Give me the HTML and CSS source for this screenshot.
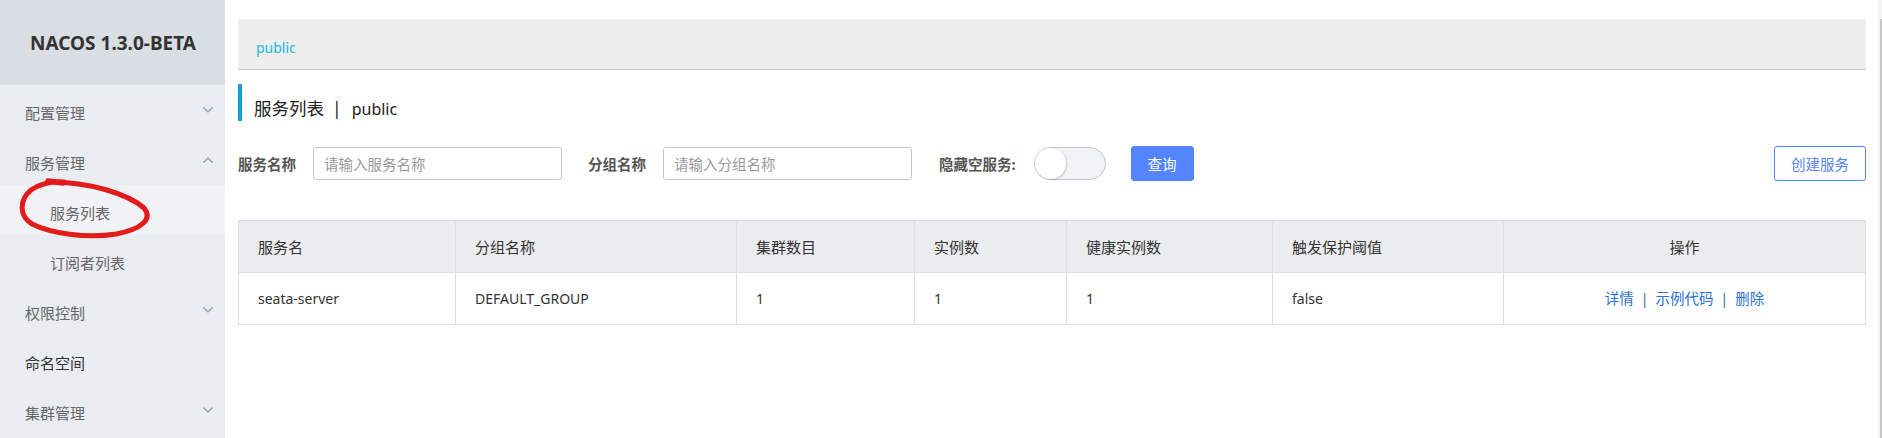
FILE: index.html
```html
<!DOCTYPE html>
<html lang="zh-CN">
<head>
<meta charset="utf-8">
<title>Nacos</title>
<link rel="stylesheet" href="styles.css">
</head>
<body>
<div class="app">
  <aside class="sidebar">
    <div class="brand">NACOS 1.3.0-BETA</div>
    <ul class="menu">
      <li class="menu-item"><span class="menu-text">配置管理</span>
        <svg class="chev" width="10" height="6" viewBox="0 0 10 6"><path d="M0.5 0.5 L5 5 L9.5 0.5" fill="none" stroke="#8b95a5" stroke-width="1.2"/></svg></li>
      <li class="menu-item"><span class="menu-text">服务管理</span>
        <svg class="chev" width="10" height="6" viewBox="0 0 10 6"><path d="M0.5 5.5 L5 1 L9.5 5.5" fill="none" stroke="#8b95a5" stroke-width="1.2"/></svg></li>
      <li class="menu-item sub active"><span class="menu-text">服务列表</span></li>
      <li class="menu-item sub"><span class="menu-text">订阅者列表</span></li>
      <li class="menu-item"><span class="menu-text">权限控制</span>
        <svg class="chev" width="10" height="6" viewBox="0 0 10 6"><path d="M0.5 0.5 L5 5 L9.5 0.5" fill="none" stroke="#8b95a5" stroke-width="1.2"/></svg></li>
      <li class="menu-item strong"><span class="menu-text">命名空间</span></li>
      <li class="menu-item"><span class="menu-text">集群管理</span>
        <svg class="chev" width="10" height="6" viewBox="0 0 10 6"><path d="M0.5 0.5 L5 5 L9.5 0.5" fill="none" stroke="#8b95a5" stroke-width="1.2"/></svg></li>
    </ul>
    <svg class="annotation" width="225" height="438" viewBox="0 0 225 438">
      <path d="M50,182 C90,182 128,194 144,208 C153,219 142,229 116,234 C86,239 50,233 32,224 C19,216 19,200 31,190 C40,184 50,181 64,182" fill="none" stroke="#e31b1b" stroke-width="5" stroke-linecap="round"/>
      <path d="M48,181 L63,183" fill="none" stroke="#e31b1b" stroke-width="5.5" stroke-linecap="round"/>
    </svg>
  </aside>
  <main class="main">
    <div class="content">
      <div class="breadcrumb"><span class="crumb">public</span></div>
      <h1 class="page-title">服务列表<span class="sep">|</span><span class="title-ns">public</span></h1>
      <div class="filters">
        <label class="f-label">服务名称</label>
        <input class="f-input" type="text" placeholder="请输入服务名称">
        <label class="f-label gap-l">分组名称</label>
        <input class="f-input" type="text" placeholder="请输入分组名称">
        <label class="f-label gap-l2">隐藏空服务:</label>
        <span class="switch"><span class="knob"></span></span>
        <button class="btn btn-primary">查询</button>
        <button class="btn btn-outline">创建服务</button>
      </div>
      <table class="grid">
        <colgroup>
          <col class="c1"><col class="c2"><col class="c3"><col class="c4"><col class="c5"><col class="c6"><col>
        </colgroup>
        <thead>
          <tr><th>服务名</th><th>分组名称</th><th>集群数目</th><th>实例数</th><th>健康实例数</th><th>触发保护阈值</th><th class="center">操作</th></tr>
        </thead>
        <tbody>
          <tr>
            <td>seata-server</td><td>DEFAULT_GROUP</td><td>1</td><td>1</td><td>1</td><td>false</td>
            <td class="center"><a class="link">详情</a><span class="pipe">|</span><a class="link">示例代码</a><span class="pipe">|</span><a class="link">删除</a></td>
          </tr>
        </tbody>
      </table>
    </div>
    <div class="scrollbar"><div class="thumb"></div></div>
  </main>
</div>
</body>
</html>
```
FILE: styles.css
```css
* { box-sizing: border-box; }
html, body { margin: 0; padding: 0; }
body {
  width: 1882px;
  height: 438px;
  overflow: hidden;
  background: #fff;
  font-family: "Noto Sans", "Open Sans", "Noto Sans CJK SC", sans-serif;
  color: #333;
}
.app { display: flex; height: 438px; }

.sidebar {
  position: relative;
  width: 225px;
  flex: 0 0 225px;
  background: #e9ecf1;
}
.brand {
  height: 85px;
  background: #d9dde4;
  display: flex;
  align-items: center;
  justify-content: center;
  font-weight: 700;
  font-size: 19px;
  color: #333;
  padding-left: 1px;
}
.menu { list-style: none; margin: 0; padding: 0; }
.menu-item {
  height: 50px;
  display: flex;
  align-items: center;
  justify-content: space-between;
  padding: 0 12px 0 25px;
  font-size: 15px;
  color: #666;
}
.menu-text { padding-top: 6px; line-height: 20px; }
.menu-item.sub { padding-left: 50px; }
.menu-item.active { background: #f1f2f6; }
.menu-item.strong { color: #333; }
.chev { display: block; }
.annotation { position: absolute; left: 0; top: 0; pointer-events: none; }

.main { flex: 1; display: flex; min-width: 0; }
.content { flex: 1; padding: 19px 12px 0 13px; min-width: 0; }
.scrollbar { width: 4px; flex: 0 0 4px; background: #f3f3f3; display: flex; justify-content: flex-end; }
.thumb { width: 2px; margin-top: 19px; height: 419px; background: #c6c6c6; }

.breadcrumb {
  height: 51px;
  background: #eeeeee;
  border-bottom: 1px solid #cccccc;
  padding: 19px 0 0 18px;
  line-height: 20px;
  font-size: 14px;
}
.crumb { color: #25b4db; }

.page-title {
  margin: 14px 0 0 0;
  height: 37px;
  border-left: 4px solid #1a9cd6;
  padding: 12px 0 0 12px;
  font-size: 17.5px;
  font-weight: 400;
  line-height: 24px;
  color: #222;
}
.sep { margin: 0 10px 0 8px; }
.title-ns { font-size: 16px; }

.filters {
  margin-top: 25px;
  height: 35px;
  display: flex;
  align-items: center;
}
.f-label {
  font-size: 14.5px;
  font-weight: 700;
  color: #555;
  margin-right: 17px;
  line-height: 20px;
}
.gap-l { margin-left: 26px; margin-right: 17px; }
.gap-l2 { margin-left: 27px; margin-right: 18px; font-weight: 700; }
.f-input {
  width: 249px;
  height: 33px;
  border: 1px solid #c4c6cf;
  border-radius: 3px;
  padding: 0 10px;
  font-family: "Noto Sans", "Noto Sans CJK SC", sans-serif;
  font-size: 14.5px;
  color: #333;
  outline: none;
}
.f-input::placeholder { color: #999; }
.switch {
  width: 72px;
  height: 33px;
  border-radius: 17px;
  background: #f2f3f7;
  border: 1px solid #c4c6cf;
  display: flex;
  align-items: center;
}
.knob {
  width: 31px;
  height: 31px;
  border-radius: 50%;
  background: #fff;
  box-shadow: 1px 1px 2px rgba(0,0,0,0.18);
}
.btn {
  height: 35px;
  border-radius: 3px;
  font-family: "Noto Sans", "Noto Sans CJK SC", sans-serif;
  font-size: 14.5px;
  padding: 0;
  cursor: pointer;
}
.btn-primary {
  width: 63px;
  margin-left: 25px;
  background: #5584ff;
  border: 1px solid #5584ff;
  color: #fff;
}
.btn-outline {
  width: 92px;
  margin-left: auto;
  background: #fff;
  border: 1px solid #5584ff;
  color: #5584ff;
}

.grid {
  margin-top: 39px;
  width: 100%;
  border-collapse: collapse;
  table-layout: fixed;
  border: 1px solid #dcdee3;
}
.c1 { width: 217px; }
.c2 { width: 281px; }
.c3 { width: 178px; }
.c4 { width: 152px; }
.c5 { width: 206px; }
.c6 { width: 231px; }
.grid th, .grid td {
  border: 1px solid #dcdee3;
  height: 52px;
  padding: 0 19px;
  text-align: left;
  vertical-align: middle;
  line-height: 20px;
}
.grid th {
  background: #ebecf0;
  font-weight: 400;
  font-size: 15px;
  color: #333;
}
.grid td { font-size: 14px; color: #333; }
.grid .center { text-align: center; }
.link { color: #2b6fd6; font-size: 14.5px; }
.pipe { color: #4a6a96; margin: 0 7px; font-size: 14px; }
```
